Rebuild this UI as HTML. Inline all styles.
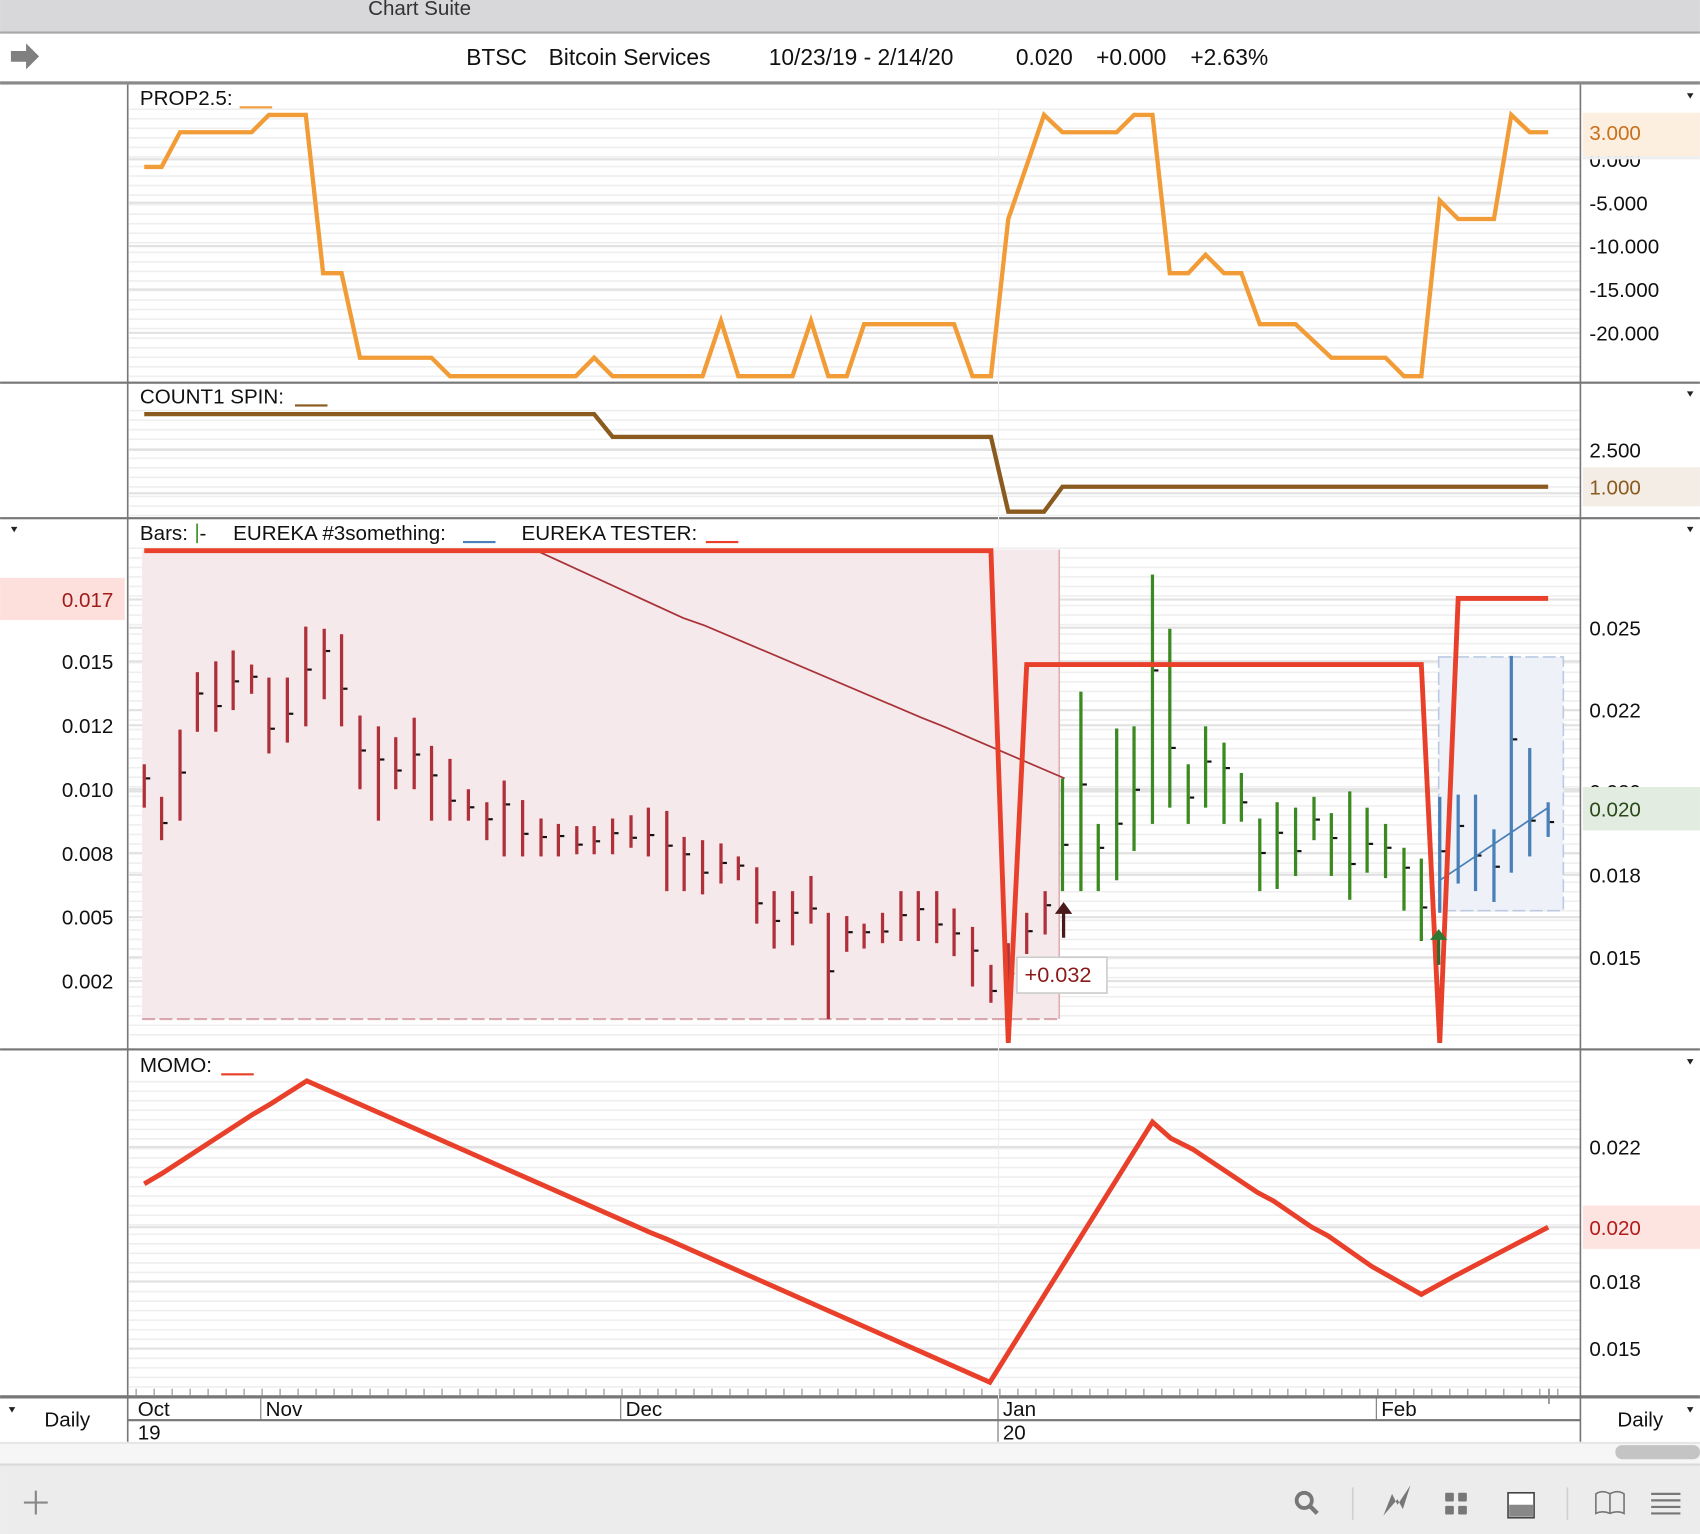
<!DOCTYPE html>
<html><head><meta charset="utf-8"><style>
html,body{margin:0;padding:0;background:#fff;}
svg{display:block;}
text{font-family:"Liberation Sans",Arial,sans-serif;}
</style></head><body>
<svg id="s" width="1700" height="1534" viewBox="0 0 1568 1415" xmlns="http://www.w3.org/2000/svg">
<rect width="1568" height="1415" fill="#fff"/>
<rect x="0" y="0" width="1568" height="29" fill="#d8d7da"/>
<rect x="0" y="29" width="1568" height="2" fill="#a8a8a8"/>
<text x="387" y="14" font-size="19" fill="#333" text-anchor="middle">Chart Suite</text>
<path d="M10 47 h14 v-7 l12 12 l-12 12 v-7 h-14z" fill="#808080"/>
<g font-size="21" fill="#111">
<text x="430" y="60">BTSC</text><text x="506" y="60">Bitcoin Services</text>
<text x="709" y="60">10/23/19 - 2/14/20</text><text x="937" y="60">0.020</text>
<text x="1011" y="60">+0.000</text><text x="1098" y="60">+2.63%</text>
</g>
<rect x="0" y="75" width="1568" height="3" fill="#8a8a8a"/>
<g id="grid"></g>
<rect x="0" y="352" width="1568" height="2" fill="#777"/>
<rect x="0" y="477" width="1568" height="2" fill="#777"/>
<rect x="0" y="967" width="1568" height="2" fill="#777"/>
<rect x="0" y="1287" width="1568" height="3" fill="#777"/>
<rect x="117" y="78" width="1.5" height="1252" fill="#777"/>
<rect x="1457" y="78" width="1.5" height="1252" fill="#777"/>
<line x1="921" y1="100" x2="921" y2="1330" stroke="#eee" stroke-width="1"/>

<text x="129" y="97" font-size="19" fill="#111">PROP2.5:</text><rect x="221" y="98" width="30" height="2" fill="#f0a040"/>
<text x="129" y="372" font-size="19" fill="#111">COUNT1 SPIN:</text><rect x="272" y="373" width="30" height="2" fill="#8b5a1e"/>
<text x="129" y="498" font-size="19" fill="#111">Bars:</text><rect x="181" y="483" width="1.5" height="18" fill="#3a8a20"/><text x="184" y="498" font-size="19" fill="#111">-</text>
<text x="215" y="498" font-size="19" fill="#111">EUREKA #3something:</text><rect x="427" y="499" width="30" height="2" fill="#4a80b8"/>
<text x="481" y="498" font-size="19" fill="#111">EUREKA TESTER:</text><rect x="651" y="499" width="30" height="2" fill="#e8402a"/>
<text x="129" y="989" font-size="19" fill="#111">MOMO:</text><rect x="204" y="990" width="30" height="2" fill="#e8402a"/>

<polyline fill="none" stroke="#f29c38" stroke-width="4" points="133,154 149,154 166,122 232,122 248,106 282,106 298,252 315,252 332,330 398,330 415,347 531,347 548,330 565,347 648,347 665,296 681,347 731,347 748,296 764,347 781,347 797,299 880,299 897,347 914,347 930,202 963,106 980,122 1030,122 1046,106 1063,106 1079,252 1096,252 1112,235 1129,252 1145,252 1162,299 1195,299 1228,330 1278,330 1295,347 1311,347 1328,185 1345,202 1378,202 1394,106 1411,122 1428,122"/>
<g font-size="19" fill="#111">
<text x="1466" y="154">0.000</text>
<text x="1466" y="194">-5.000</text>
<text x="1466" y="234">-10.000</text>
<text x="1466" y="274">-15.000</text>
<text x="1466" y="314">-20.000</text>
</g>
<rect x="1460" y="104" width="108" height="40" fill="#fcefe0"/>
<rect x="1460" y="144" width="108" height="3" fill="#eee"/>
<text x="1466" y="129" font-size="19" fill="#c8701c">3.000</text>
<path d="M1556 86 l6 0 l-3 5z M1556 361 l6 0 l-3 5z M1556 486 l6 0 l-3 5z M1556 977 l6 0 l-3 5z M10 486 l6 0 l-3 5z M8 1298 l6 0 l-3 5z M1556 1298 l6 0 l-3 5z" fill="#222"/>

<polyline fill="none" stroke="#8b5a1e" stroke-width="4" points="133,382 548,382 565,403 914,403 930,472 963,472 980,449 1428,449"/>
<text x="1466" y="422" font-size="19" fill="#111">2.500</text>
<rect x="1460" y="431" width="108" height="36" fill="#f3ede6"/>
<text x="1466" y="456" font-size="19" fill="#8b5a1e">1.000</text>

<rect x="131" y="507" width="846" height="433" fill="#f6e9eb"/>
<line x1="977" y1="507" x2="977" y2="940" stroke="#dcb0b4" stroke-width="1.5"/>
<line x1="131" y1="940" x2="977" y2="940" stroke="#d8a8ae" stroke-width="2" stroke-dasharray="12,4"/>
<rect x="1327" y="606" width="115" height="234" fill="#eef1f8" stroke="#bccbe2" stroke-width="1.5" stroke-dasharray="12,4"/>
<g id="bars"></g>
<polyline fill="none" stroke="#a83238" stroke-width="1.6" points="495,508 630,570 650,577 850,662 870,670 982,718"/>
<line x1="1328" y1="812" x2="1428" y2="745" stroke="#4a80b8" stroke-width="1.6"/>
<polyline fill="none" stroke="#e8402a" stroke-width="4.5" points="133,508 914,508 930,962 947,613 1311,613 1328,962 1345,552 1428,552"/>
<path d="M981 865 V840" stroke="#4a1a1a" stroke-width="3"/><path d="M973 843 l8 -11 l8 11z" fill="#4a1a1a"/>
<path d="M1327 890 V865" stroke="#2e6a2e" stroke-width="3"/><path d="M1319 867 l8 -10 l8 10z" fill="#2e7a32"/>
<rect x="938" y="883" width="83" height="33" fill="#fff" stroke="#ccc" stroke-width="1.5"/>
<text x="945" y="906" font-size="20" fill="#8a1a1a">+0.032</text>
<g font-size="19" fill="#111">
<text x="57" y="617">0.015</text><text x="57" y="676">0.012</text><text x="57" y="735">0.010</text>
<text x="57" y="794">0.008</text><text x="57" y="853">0.005</text><text x="57" y="912">0.002</text>
<text x="1466" y="586">0.025</text><text x="1466" y="662">0.022</text><text x="1466" y="737">0.020</text>
<text x="1466" y="814">0.018</text><text x="1466" y="890">0.015</text>
</g>
<rect x="0" y="533" width="115" height="39" fill="#fde0dc"/>
<text x="57" y="560" font-size="19" fill="#a01c1c">0.017</text>
<rect x="1460" y="726" width="108" height="40" fill="#e3ece0"/>
<text x="1466" y="753" font-size="19" fill="#2a4a1a">0.020</text>

<polyline fill="none" stroke="#e8402a" stroke-width="4.5" points="133,1092 150,1082 233,1028 250,1018 283,997 600,1137 615,1143 913,1275 1063,1035 1080,1050 1100,1060 1160,1100 1175,1108 1210,1132 1225,1140 1265,1168 1311,1194 1340,1178 1428,1132"/>
<g font-size="19" fill="#111">
<text x="1466" y="1065">0.022</text><text x="1466" y="1189">0.018</text><text x="1466" y="1251">0.015</text>
</g>
<rect x="1460" y="1112" width="108" height="40" fill="#fde4e0"/>
<text x="1466" y="1139" font-size="19" fill="#b01c1c">0.020</text>

<g id="ticks"></g>
<rect x="118" y="1309" width="1340" height="2" fill="#777"/>
<g fill="#777"><rect x="240" y="1290" width="1" height="20"/><rect x="572" y="1290" width="1" height="20"/><rect x="920" y="1290" width="1" height="40"/><rect x="1269" y="1290" width="1" height="20"/></g>
<g font-size="19" fill="#111">
<text x="127" y="1306">Oct</text><text x="245" y="1306">Nov</text><text x="577" y="1306">Dec</text><text x="925" y="1306">Jan</text><text x="1274" y="1306">Feb</text>
<text x="127" y="1328">19</text><text x="925" y="1328">20</text>
<text x="62" y="1316" text-anchor="middle">Daily</text><text x="1513" y="1316" text-anchor="middle">Daily</text>
</g>
<rect x="0" y="1330" width="1568" height="2" fill="#e6e6e6"/>
<rect x="0" y="1332" width="1568" height="18" fill="#f6f6f6"/>
<rect x="1490" y="1333" width="78" height="13" rx="6" fill="#c4c4c4"/>
<rect x="0" y="1350" width="1568" height="2" fill="#d8d8d8"/>
<rect x="0" y="1352" width="1568" height="63" fill="#ececec"/>
<path d="M33 1375 v22 M22 1386 h22" stroke="#888" stroke-width="2"/>
<circle cx="1203" cy="1384" r="7" fill="none" stroke="#777" stroke-width="3.5"/><path d="M1208 1389 l7 7" stroke="#777" stroke-width="4"/>
<rect x="1247" y="1372" width="1.5" height="30" fill="#d0d0d0"/>
<path d="M1276 1398 l8 -20 l5 10 l12 -18 l-7 22 l-5 -9z" fill="#777"/>
<g fill="#777"><rect x="1333" y="1377" width="8" height="8" rx="1"/><rect x="1345" y="1377" width="8" height="8" rx="1"/><rect x="1333" y="1389" width="8" height="8" rx="1"/><rect x="1345" y="1389" width="8" height="8" rx="1"/></g>
<rect x="1391" y="1377" width="24" height="23" fill="#fff" stroke="#444" stroke-width="1.5"/><rect x="1392" y="1388" width="22" height="11" fill="#888"/>
<rect x="1445" y="1372" width="1.5" height="30" fill="#d0d0d0"/>
<path d="M1472 1396 v-18 q6 -4 13 0 q7 -4 13 0 v18 q-6 -3 -13 0 q-7 -3 -13 0z M1485 1378 v18" fill="none" stroke="#777" stroke-width="1.5"/>
<path d="M1523 1378 h27 M1523 1384 h27 M1523 1390 h27 M1523 1396 h27" stroke="#777" stroke-width="2"/>
</svg>
<script>
var NS="http://www.w3.org/2000/svg";
function el(p,t,a){var e=document.createElementNS(NS,t);for(var k in a)e.setAttribute(k,a[k]);p.appendChild(e);return e;}
var g=document.getElementById("grid");
[[100,350],[378,476],[505,962],[997,1285]].forEach(function(r){for(var y=r[0];y<r[1];y+=8.8){el(g,"rect",{x:119,y:y,width:1338,height:1.5,fill:"#efefef"});}});
[147,187,227,267,307,415,455,553,610,669,728,787,846,905,579,655,730,807,883,1058,1132,1182,1244].forEach(function(y){el(g,"rect",{x:119,y:y-1,width:1338,height:2,fill:"#e2e2e2"});});
var bars=[[133,705,745],[149,735,775],[166,673,757],[182,620,675],[199,610,675],[215,600,655],[232,613,640],[248,625,695],[265,625,685],[282,578,670],[299,580,645],[315,585,670],[332,660,728],[349,670,757],[365,680,728],[382,662,728],[398,688,757],[415,700,757],[432,728,757],[449,740,775],[465,720,790],[482,738,790],[499,755,790],[515,760,790],[532,762,788],[548,762,788],[565,755,788],[582,752,782],[598,745,790],[615,748,822],[631,772,822],[648,775,825],[665,778,815],[681,790,812],[698,800,852],[714,822,875],[731,822,872],[748,808,852],[764,842,940],[781,845,878],[797,852,875],[814,842,870],[831,822,868],[847,822,868],[864,822,870],[880,838,882],[897,855,910],[914,890,925],[930,870,920],[947,842,880],[964,822,862],
[980,718,822,1],[997,638,822,1],[1013,760,822,1],[1030,672,812,1],[1046,670,785,1],[1063,530,760,1],[1079,580,745,1],[1096,705,760,1],[1112,670,745,1],[1129,685,760,1],[1145,713,758,1],[1162,755,822,1],[1178,740,820,1],[1195,745,808,1],[1212,735,775,1],[1228,750,808,1],[1245,730,830,1],[1261,745,805,1],[1278,760,810,1],[1295,782,840,1],[1311,792,868,1],
[1328,735,842,2],[1345,733,815,2],[1361,733,822,2],[1378,765,832,2],[1394,605,805,2],[1411,690,790,2],[1428,740,772,2]];
var cols=["#b0303a","#3a8a20","#4a80b8"];
var b=document.getElementById("bars");
bars.forEach(function(d,i){var c=cols[d[3]||0];el(b,"rect",{x:d[0]-1.5,y:d[1],width:3,height:d[2]-d[1],fill:c});var ty=d[1]+(d[2]-d[1])*(0.3+0.4*((i*37)%10)/10);el(b,"rect",{x:d[0]+1.5,y:ty,width:4,height:2,fill:"#111"});});
var t=document.getElementById("ticks");
for(var x=125;x<1440;x+=16.6){el(t,"rect",{x:x,y:1281,width:1,height:6,fill:"#888"});}
el(t,"rect",{x:1428,y:1281,width:1.5,height:14,fill:"#888"});
</script>
</body></html>
